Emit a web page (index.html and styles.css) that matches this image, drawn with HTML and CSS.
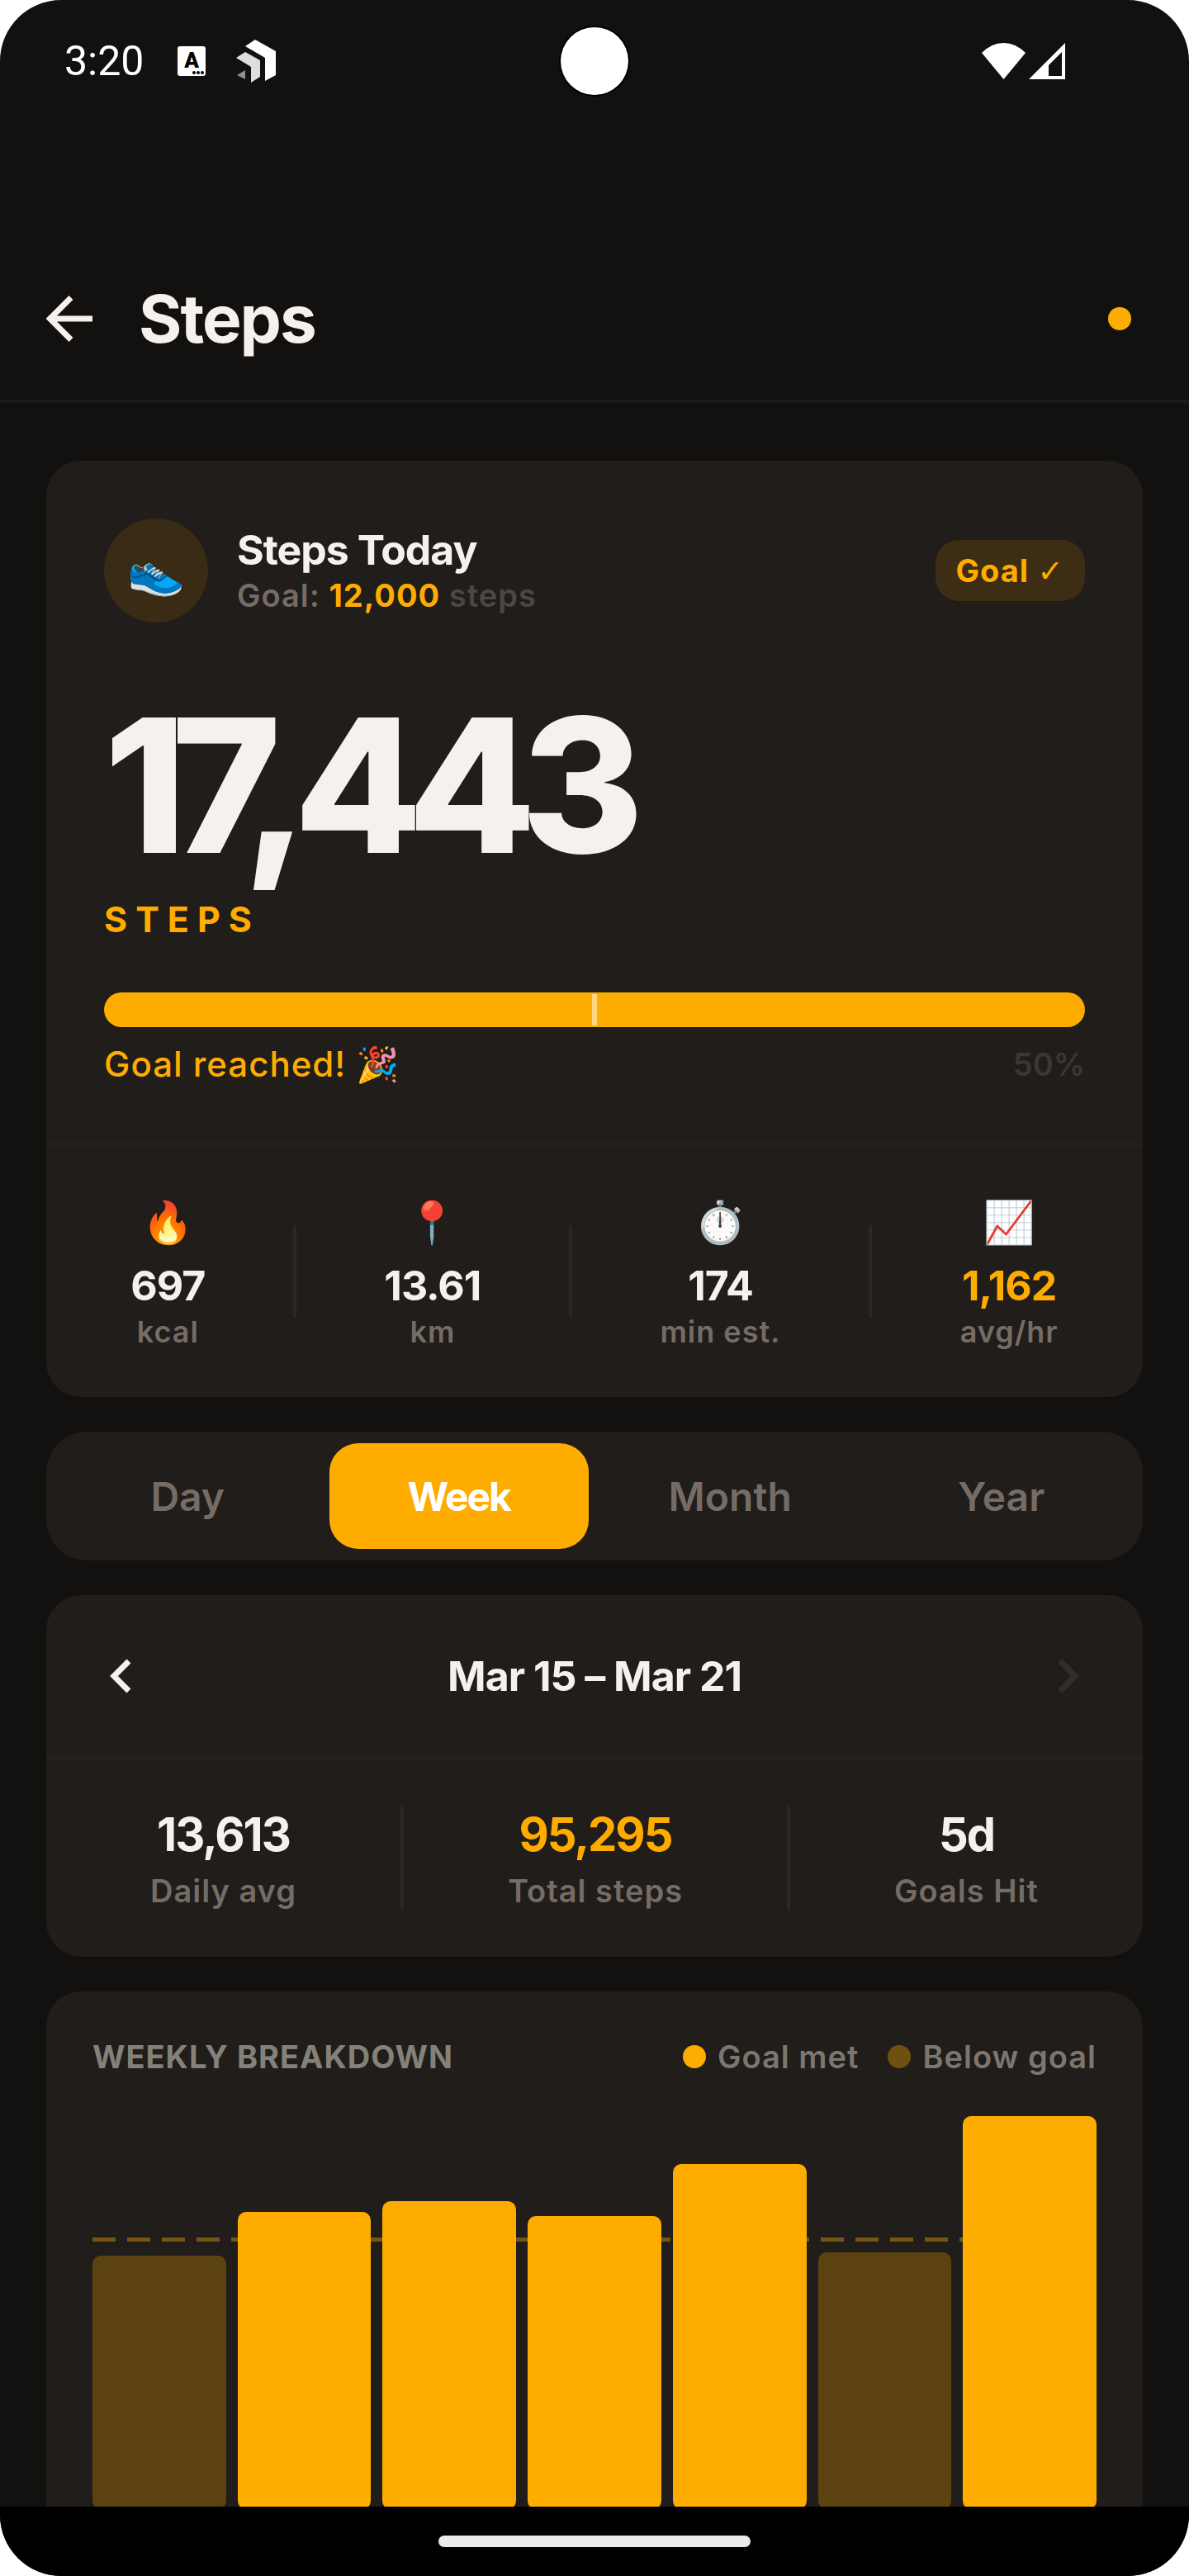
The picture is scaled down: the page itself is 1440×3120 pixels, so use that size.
FILE: index.html
```
<!DOCTYPE html>
<html lang="en">
<head>
    <meta charset="UTF-8">
    <meta name="viewport" content="width=device-width, initial-scale=1">
    <title>Steps</title>
    <link rel="stylesheet" href="styles.css">
</head>
<body>
    <div class="screen">
        <div class="status-bar">
            <div class="status-left">
                <span class="clock">3:20</span>
                <svg class="status-app" viewBox="0 0 34 36">
                    <rect width="34" height="36" rx="3" fill="#fff"/>
                    <text x="17" y="26" text-anchor="middle" class="status-letter">A</text>
                    <circle cx="20" cy="32" r="2"/><circle cx="25" cy="32" r="2"/><circle cx="30" cy="32" r="2"/>
                </svg>
                <svg class="status-brand" viewBox="0 0 48 52">
                    <path d="M23 0 48 14V43L35 50V22L11 8Z" fill="#fff"/>
                    <path d="M11 15 29 25V45L18 52V33L0 22Z" fill="#dedede"/>
                    <path d="M11 37V48L1 43Z" fill="#8f8f8f"/>
                </svg>
            </div>
            <div class="camera"></div>
            <div class="status-right">
                <svg class="status-wifi" viewBox="0 0 53 44"><path d="M26.500 44 0 12Q12 0 26.500 0T53 12Z" fill="#fff"/></svg>
                <svg class="status-signal" viewBox="0 0 44 44"><path fill-rule="evenodd" d="M44 0V44H0ZM40 11 24 27V40H40Z" fill="#fff"/></svg>
            </div>
        </div>

        <header class="header">
            <button class="icon-btn" type="button" aria-label="Back">
                <svg class="arrow" viewBox="0 0 56 56"><path d="M30 2.500 4.500 28 30 53.500M4 28H56"/></svg>
            </button>
            <h1>Steps</h1>
            <span class="dot sync"></span>
        </header>

        <main class="content">
            <section class="card">
                <div class="today">
                    <div class="today-head">
                        <div class="today-icon">👟</div>
                        <div class="today-title">
                            <h2>Steps Today</h2>
                            <p class="goal">Goal: <b>12,000</b> <span>steps</span></p>
                        </div>
                        <span class="badge">Goal <span class="check">✓</span></span>
                    </div>
                    <div class="total">17,443</div>
                    <div class="unit">STEPS</div>
                    <div class="progress"><span class="progress-mark"></span></div>
                    <div class="progress-text">
                        <span>Goal reached! 🎉</span>
                        <span class="percent">50%</span>
                    </div>
                </div>
                <div class="stats metrics">
                    <div class="stat"><span class="emoji">🔥</span><strong>697</strong><span class="label">kcal</span></div>
                    <i class="sep"></i>
                    <div class="stat"><span class="emoji">📍</span><strong>13.61</strong><span class="label">km</span></div>
                    <i class="sep"></i>
                    <div class="stat"><span class="emoji">⏱️</span><strong>174</strong><span class="label">min est.</span></div>
                    <i class="sep"></i>
                    <div class="stat"><span class="emoji">📈</span><strong class="accent">1,162</strong><span class="label">avg/hr</span></div>
                </div>
            </section>

            <nav class="tabs">
                <button type="button">Day</button>
                <button type="button" class="active">Week</button>
                <button type="button">Month</button>
                <button type="button">Year</button>
            </nav>

            <section class="card">
                <div class="range">
                    <button class="icon-btn" type="button" aria-label="Previous week">
                        <svg class="chevron" viewBox="0 0 26 42"><path d="M23 3 5 21 23 39"/></svg>
                    </button>
                    <h2>Mar 15 – Mar 21</h2>
                    <button class="icon-btn" type="button" aria-label="Next week" disabled>
                        <svg class="chevron" viewBox="0 0 26 42"><path d="M3 3 21 21 3 39"/></svg>
                    </button>
                </div>
                <div class="stats summary">
                    <div class="stat"><strong>13,613</strong><span class="label">Daily avg</span></div>
                    <i class="sep"></i>
                    <div class="stat"><strong class="accent">95,295</strong><span class="label">Total steps</span></div>
                    <i class="sep"></i>
                    <div class="stat"><strong>5d</strong><span class="label">Goals Hit</span></div>
                </div>
            </section>

            <section class="card breakdown">
                <div class="breakdown-head">
                    <h3>WEEKLY BREAKDOWN</h3>
                    <div class="legend">
                        <span class="legend-item"><i class="dot"></i>Goal met</span>
                        <span class="legend-item"><i class="dot below"></i>Below goal</span>
                    </div>
                </div>
                <div class="chart">
                    <div class="goal-line"></div>
                    <div class="bar below" style="height: 64.5%"></div>
                    <div class="bar" style="height: 75.6%"></div>
                    <div class="bar" style="height: 78.4%"></div>
                    <div class="bar" style="height: 74.6%"></div>
                    <div class="bar" style="height: 87.9%"></div>
                    <div class="bar below" style="height: 65.4%"></div>
                    <div class="bar" style="height: 100%"></div>
                </div>
            </section>
        </main>

        <div class="nav-bar"><span class="nav-pill"></span></div>
    </div>
</body>
</html>
```
FILE: styles.css
```
:root {
    --bg: #12110f;
    --card: #201d1a;
    --line: #25221e;
    --accent: #ffac00;
    --text: #f5f1ec;
    --muted: #756c66;
    --faint: #4c4743;
}

* {
    box-sizing: border-box;
    margin: 0;
}

body {
    background: #fff;
    color: var(--text);
    font-family: Inter, Roboto, "Noto Color Emoji", sans-serif;
}

button {
    background: none;
    border: 0;
    padding: 0;
    font: inherit;
    color: inherit;
}

svg {
    display: block;
}

.screen {
    display: flex;
    flex-direction: column;
    height: 100vh;
    overflow: hidden;
    background: var(--bg);
    border-radius: 74px;
}

/* status bar */
.status-bar {
    display: grid;
    grid-template-columns: 1fr auto 1fr;
    align-items: center;
    height: 148px;
    flex-shrink: 0;
    padding: 0 150px 0 78px;
    position: relative;
}

.status-left,
.status-right {
    display: flex;
    align-items: center;
}

.status-right {
    grid-column: 3;
    justify-content: flex-end;
    gap: 4px;
}

.clock {
    font-family: Roboto, sans-serif;
    font-size: 50px;
    color: #fff;
}

.status-app {
    width: 34px;
    height: 36px;
    margin-left: 41px;
}

.status-letter {
    font: 900 26px Roboto, sans-serif;
}

.status-brand {
    width: 48px;
    height: 52px;
    margin-left: 37px;
}

.status-wifi {
    width: 53px;
    height: 44px;
}

.status-signal {
    width: 44px;
    height: 44px;
}

/* camera cutout lies over the bar */
.camera {
    position: absolute;
    left: 50%;
    top: 50%;
    width: 82px;
    height: 82px;
    transform: translate(-50%, -50%);
    border-radius: 50%;
    background: #fff;
    box-shadow: 0 0 0 2px #000;
}

/* header */
.header {
    display: flex;
    align-items: center;
    gap: 56px;
    height: 200px;
    flex-shrink: 0;
    margin-top: 140px;
    padding: 0 70px 0 56px;
    border-bottom: 4px solid #1b1a18;
}

.header h1 {
    font-size: 80px;
    font-weight: 700;
    line-height: 96px;
    letter-spacing: -2px;
}

.arrow {
    width: 56px;
    height: 56px;
    fill: none;
    stroke: var(--text);
    stroke-width: 7;
}

.dot {
    width: 28px;
    height: 28px;
    border-radius: 50%;
    background: var(--accent);
}

.dot.below {
    background: #6f5011;
}

.sync {
    margin-left: auto;
}

/* scroll area */
.content {
    flex: 1;
    min-height: 0;
    overflow: hidden;
    display: flex;
    flex-direction: column;
    gap: 42px;
    padding: 70px 56px 0;
}

.card {
    flex-shrink: 0;
    background: var(--card);
    border-radius: 42px;
}

.card h2 {
    font-size: 50px;
    font-weight: 700;
    line-height: 60px;
    letter-spacing: -1px;
}

/* today */
.today {
    padding: 70px;
}

.today-head {
    display: flex;
    align-items: center;
    gap: 35px;
}

.today-icon {
    display: flex;
    align-items: center;
    justify-content: center;
    width: 126px;
    height: 126px;
    border-radius: 50%;
    background: #3a2b14;
    font-size: 56px;
}

.today-title {
    flex: 1;
}

.goal {
    font-size: 38px;
    font-weight: 600;
    line-height: 50px;
    letter-spacing: 1px;
    color: var(--muted);
}

.goal b {
    font-weight: 700;
    color: var(--accent);
}

.goal span {
    color: var(--faint);
}

.badge {
    padding: 12px 25px;
    border-radius: 28px;
    background: #3d2d14;
    color: var(--accent);
    font-size: 38px;
    font-weight: 700;
    line-height: 50px;
    letter-spacing: 1px;
}

.check {
    font-family: "DejaVu Sans", sans-serif;
    line-height: 1;
}

.total {
    margin-top: 77px;
    font-size: 226px;
    font-weight: 800;
    line-height: 240px;
    letter-spacing: -18px;
}

.unit {
    margin-top: 17px;
    font-size: 43px;
    font-weight: 700;
    line-height: 50px;
    letter-spacing: 10px;
    color: var(--accent);
}

.progress {
    display: flex;
    justify-content: center;
    margin-top: 64px;
    height: 42px;
    padding: 2px 0;
    border-radius: 21px;
    background: var(--accent);
}

.progress-mark {
    width: 6px;
    background: rgba(255, 255, 255, 0.5);
}

.progress-text {
    display: flex;
    justify-content: space-between;
    margin-top: 20px;
    font-size: 42px;
    font-weight: 500;
    line-height: 50px;
    letter-spacing: 1px;
    color: var(--accent);
}

.percent {
    font-size: 38px;
    font-weight: 600;
    letter-spacing: 0;
    color: #3b3733;
}

/* stats rows */
.stats {
    display: flex;
    align-items: center;
    justify-content: space-around;
    border-top: 4px solid var(--line);
}

.stat {
    display: flex;
    flex-direction: column;
    align-items: center;
}

.stat strong {
    font-weight: 700;
}

.accent {
    color: var(--accent);
}

.label {
    color: var(--muted);
    font-weight: 600;
    letter-spacing: 1px;
}

.sep {
    width: 4px;
    background: #2c2820;
}

.metrics {
    padding: 56px 49px;
}

.metrics .emoji {
    font-size: 50px;
    line-height: 72px;
}

.metrics strong {
    margin-top: 11px;
    font-size: 50px;
    line-height: 60px;
    letter-spacing: -1px;
}

.metrics .label {
    margin-top: 4px;
    font-size: 36px;
    line-height: 45px;
}

.metrics .sep {
    height: 112px;
}

.summary {
    padding: 56px 63px;
}

.summary strong {
    font-size: 56px;
    line-height: 68px;
    letter-spacing: -2px;
}

.summary .label {
    margin-top: 10px;
    font-size: 38px;
    line-height: 48px;
}

.summary .sep {
    height: 126px;
}

/* tabs */
.tabs {
    display: flex;
    flex-shrink: 0;
    gap: 14px;
    padding: 14px;
    border-radius: 49px;
    background: var(--card);
}

.tabs button {
    flex: 1;
    height: 128px;
    border-radius: 35px;
    color: var(--muted);
    font-size: 48px;
    font-weight: 600;
}

.tabs .active {
    background: var(--accent);
    color: #fff;
    font-weight: 700;
    letter-spacing: -2px;
}

/* date range */
.range {
    display: flex;
    align-items: center;
    justify-content: space-between;
    height: 196px;
    padding: 0 77px;
}

.chevron {
    width: 26px;
    height: 42px;
    fill: none;
    stroke: var(--text);
    stroke-width: 7;
}

.icon-btn:disabled .chevron {
    stroke: #322f2b;
}

/* chart */
.breakdown {
    padding: 56px;
}

.breakdown-head {
    display: flex;
    align-items: center;
    justify-content: space-between;
    line-height: 46px;
}

.breakdown h3 {
    font-size: 38px;
    font-weight: 700;
    letter-spacing: 1px;
    color: #858079;
}

.legend {
    display: flex;
    gap: 35px;
}

.legend-item {
    display: flex;
    align-items: center;
    gap: 14px;
    font-size: 38px;
    font-weight: 600;
    letter-spacing: 1px;
    color: #7d766f;
}

.chart {
    position: relative;
    display: flex;
    align-items: flex-end;
    gap: 14px;
    height: 476px;
    margin-top: 49px;
}

.bar {
    flex: 1;
    border-radius: 10px;
    background: var(--accent);
    position: relative;
}

.bar.below {
    background: #5c4210;
}

/* 12,000 step goal, drawn behind the bars */
.goal-line {
    position: absolute;
    left: 0;
    right: 0;
    bottom: 68%;
    height: 5px;
    background: repeating-linear-gradient(90deg, #785411 0 28px, transparent 28px 42px);
}

/* gesture bar */
.nav-bar {
    display: flex;
    align-items: center;
    justify-content: center;
    height: 84px;
    flex-shrink: 0;
    background: #000;
}

.nav-pill {
    width: 378px;
    height: 14px;
    border-radius: 7px;
    background: #ebebeb;
}
```
